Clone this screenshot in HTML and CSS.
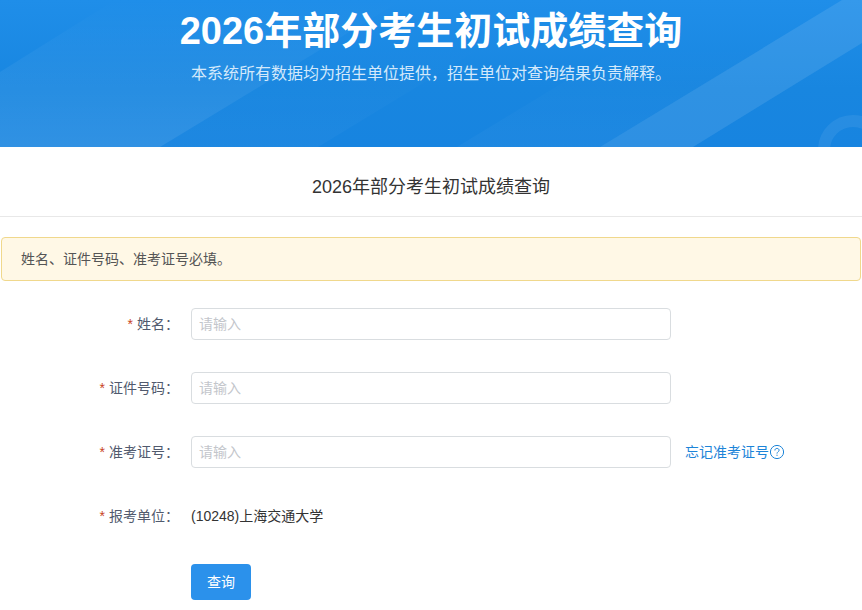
FILE: index.html
```
<!DOCTYPE html>
<html lang="zh-CN">
<head>
    <meta charset="UTF-8">
    <meta name="viewport" content="width=device-width, initial-scale=1.0">
    <title>2026年部分考生初试成绩查询</title>
    <link rel="stylesheet" href="styles.css">
</head>
<body>
    <header class="banner">
        <svg class="banner-bg" viewBox="0 0 862 147" preserveAspectRatio="none" aria-hidden="true">
            <defs>
                <linearGradient id="base" x1="0" y1="0" x2="0" y2="1">
                    <stop offset="0" stop-color="#1f8ee9"/>
                    <stop offset="0.6" stop-color="#1886e0"/>
                    <stop offset="1" stop-color="#1784e0"/>
                </linearGradient>
                <linearGradient id="fade" x1="0" y1="0" x2="0" y2="1">
                    <stop offset="0" stop-color="#fff" stop-opacity="0"/>
                    <stop offset="1" stop-color="#fff" stop-opacity="0.11"/>
                </linearGradient>
                <linearGradient id="faint" x1="0" y1="0" x2="0" y2="1">
                    <stop offset="0.3" stop-color="#fff" stop-opacity="0"/>
                    <stop offset="1" stop-color="#fff" stop-opacity="0.03"/>
                </linearGradient>
            </defs>
            <rect width="862" height="147" fill="url(#base)"/>
            <path d="M0 72L115 0H402L160 147H0z" fill="url(#fade)"/>
            <path d="M160 147L402 0H560L318 147z" fill="url(#faint)"/>
            <path d="M457 147L699 0H842L600 147z" fill="url(#faint)"/>
            <path d="M600 147L842 0H862V43L693 147z" fill="#fff" fill-opacity="0.1"/>
            <circle cx="853" cy="150" r="29" fill="none" stroke="#fff" stroke-opacity="0.07" stroke-width="12"/>
        </svg>
        <h1>2026年部分考生初试成绩查询</h1>
        <p>本系统所有数据均为招生单位提供，招生单位对查询结果负责解释。</p>
    </header>

    <main>
        <h2 class="page-title">2026年部分考生初试成绩查询</h2>
        <div class="alert">姓名、证件号码、准考证号必填。</div>

        <form class="query-form">
            <div class="form-item">
                <label class="required" for="xm">姓名：</label>
                <input type="text" id="xm" name="xm" placeholder="请输入">
            </div>
            <div class="form-item">
                <label class="required" for="zjhm">证件号码：</label>
                <input type="text" id="zjhm" name="zjhm" placeholder="请输入">
            </div>
            <div class="form-item">
                <label class="required" for="ksbh">准考证号：</label>
                <input type="text" id="ksbh" name="ksbh" placeholder="请输入">
                <a class="forget" href="#">忘记准考证号<svg width="16" height="16" viewBox="0 0 16 16" fill="none" stroke="currentColor" aria-hidden="true">
                    <circle cx="8" cy="8" r="6.6"/>
                    <path d="M5.9 6.5C5.9 5.1 6.8 4.4 8 4.4S10.1 5.2 10.1 6.3C10.1 7.7 8 7.8 8 9.6"/>
                    <path d="M8 10.7V11.9"/>
                </svg></a>
            </div>
            <div class="form-item">
                <label class="required" for="bkdw">报考单位：</label>
                <output id="bkdw">(10248)上海交通大学</output>
            </div>
            <div class="form-actions">
                <button type="submit">查询</button>
            </div>
        </form>
    </main>
</body>
</html>
```
FILE: styles.css
```
* {
    margin: 0;
    padding: 0;
    box-sizing: border-box;
}

body {
    background-color: #fff;
    color: #333;
    font-family: "Liberation Sans", "Noto Sans CJK SC", sans-serif;
    font-size: 14px;
    line-height: 20px;
}

.banner {
    position: relative;
    padding: 5px 20px 61px;
    color: #fff;
    text-align: center;
}

.banner-bg {
    position: absolute;
    inset: 0;
    z-index: -1;
    width: 100%;
    height: 100%;
}

.banner h1 {
    font-size: 38px;
    line-height: 52px;
}

.banner p {
    margin-top: 5px;
    font-size: 16px;
    line-height: 24px;
    color: #d4e9fb;
}

.page-title {
    padding: 25px 20px 14px;
    border-bottom: 1px solid #e8e8e8;
    font-size: 18px;
    font-weight: normal;
    line-height: 30px;
    text-align: center;
}

.alert {
    margin: 20px 1px 0;
    padding: 11px 19px;
    border: 1px solid #f0d88c;
    border-radius: 4px;
    background-color: #fff8e6;
    color: #555;
}

.query-form {
    padding: 23px 20px 10px 0;
}

.form-item {
    display: flex;
    align-items: center;
    min-height: 40px;
    margin-bottom: 24px;
}

.form-item label {
    flex: 0 0 191px;
    padding-right: 12px;
    color: #515a6e;
    text-align: right;
}

.required::before {
    content: "*";
    margin-right: 4px;
    color: #c7431c;
}

.form-item input {
    flex: 0 1 480px;
    min-width: 0;
    height: 32px;
    padding: 0 7px;
    border: 1px solid #d9dde0;
    border-radius: 4px;
    color: #333;
    font: inherit;
}

.form-item input::placeholder {
    color: #c3c6cb;
}

.forget {
    display: flex;
    align-items: center;
    flex-shrink: 0;
    margin-left: 14px;
    color: #1c84d8;
    text-decoration: none;
}

.form-actions {
    padding: 4px 0 0 191px;
}

.form-actions button {
    height: 36px;
    padding: 0 16px;
    border: none;
    border-radius: 4px;
    background-color: #2b91eb;
    color: #fff;
    font: inherit;
    cursor: pointer;
}
```
